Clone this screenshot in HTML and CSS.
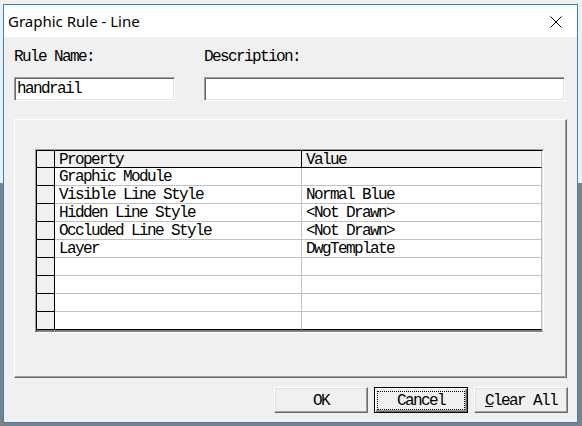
FILE: index.html
```html
<!DOCTYPE html>
<html lang="en">
<head>
  <meta charset="UTF-8">
  <title>Graphic Rule - Line</title>
  <link rel="stylesheet" href="styles.css">
</head>
<body>
<div class="dialog">
  <div class="titlebar">
    <span class="title">Graphic Rule - Line</span>
    <svg class="close" width="12" height="12" viewBox="0 0 12 12">
      <path d="M0.5 0.5 L11.5 11.5 M11.5 0.5 L0.5 11.5" stroke="#000" stroke-width="1" fill="none"/>
    </svg>
  </div>

  <div class="body">
    <div class="fields">
      <div class="field rule-name">
        <label>Rule Name:</label>
        <div class="edit">handrail</div>
      </div>
      <div class="field description">
        <label>Description:</label>
        <div class="edit"></div>
      </div>
    </div>

    <div class="panel">
      <div class="grid-frame">
        <table class="grid">
          <tr class="head">
            <td class="fixed"></td>
            <td class="prop">Property</td>
            <td class="val">Value</td>
          </tr>
          <tr><td class="fixed"></td><td class="prop">Graphic Module</td><td class="val"></td></tr>
          <tr><td class="fixed"></td><td class="prop">Visible Line Style</td><td class="val">Normal Blue</td></tr>
          <tr><td class="fixed"></td><td class="prop">Hidden Line Style</td><td class="val">&lt;Not Drawn&gt;</td></tr>
          <tr><td class="fixed"></td><td class="prop">Occluded Line Style</td><td class="val">&lt;Not Drawn&gt;</td></tr>
          <tr><td class="fixed"></td><td class="prop">Layer</td><td class="val">DwgTemplate</td></tr>
          <tr><td class="fixed"></td><td class="prop"></td><td class="val"></td></tr>
          <tr><td class="fixed"></td><td class="prop"></td><td class="val"></td></tr>
          <tr><td class="fixed"></td><td class="prop"></td><td class="val"></td></tr>
          <tr class="last"><td class="fixed"></td><td class="prop"></td><td class="val"></td></tr>
        </table>
      </div>
    </div>

    <div class="buttons">
      <button class="btn">OK</button>
      <button class="btn default">Cancel</button>
      <button class="btn"><u>C</u>lear All</button>
    </div>
  </div>
</div>
</body>
</html>
```

FILE: styles.css
```css
body {
  margin: 0;
  width: 582px;
  height: 426px;
  overflow: hidden;
  background: linear-gradient(#f0f0f0 0, #f0f0f0 183px, #808080 183px);
  font-family: "Liberation Mono", monospace;
  font-size: 16px;
  letter-spacing: -1.6px;
  color: #000;
}

.dialog {
  box-sizing: border-box;
  width: 575px;
  height: 419px;
  margin: 4px 0 0 3px;
  border: 1px solid #2a84d2;
  background: #f0f0f0;
  display: flex;
  flex-direction: column;
}

/* title bar */
.titlebar {
  height: 32px;
  background: #fff;
  display: flex;
  align-items: center;
  padding-left: 4px;
}

.title {
  font-family: "Segoe UI", "Noto Sans", sans-serif;
  font-size: 15px;
  letter-spacing: 0;
  flex: 1;
}

.close {
  margin-right: 15px;
  margin-top: 1px;
}

.body {
  padding: 12px 10px 0 10px;
}

/* name + description */
.fields {
  display: flex;
  gap: 29px;
}

.field label {
  display: block;
  line-height: 16px;
  height: 16px;
  margin-bottom: 12px;
}

.rule-name { width: 161px; }
.description { width: 361px; }

.edit {
  box-sizing: border-box;
  height: 24px;
  background: #fff;
  border: 1px solid;
  border-color: #a0a0a0 #fff #fff #a0a0a0;
  box-shadow: inset 1px 1px 0 #696969, inset -1px -1px 0 #e3e3e3;
  padding: 2px 0 0 2px;
  line-height: 18px;
  white-space: nowrap;
}

/* group panel */
.panel {
  box-sizing: border-box;
  height: 259px;
  margin-top: 18px;
  border: 1px solid;
  border-color: #fff #696969 #696969 #fff;
  box-shadow: inset -1px -1px 0 #a0a0a0;
  padding: 29px 0 0 20px;
}

.grid-frame {
  width: 507px;
  border: 1px solid;
  border-color: #a0a0a0 #fff #fff #a0a0a0;
}

.grid {
  width: 507px;
  border-spacing: 0;
  background: #fff;
  border-top: 1px solid #000;
  border-left: 1px solid #000;
  border-right: 1px solid #e3e3e3;
  border-bottom: 2px solid #808080;
  table-layout: fixed;
}

.grid td {
  padding: 2px 0 0 4px;
  height: 15px;
  line-height: 15px;
  white-space: nowrap;
  overflow: hidden;
  border-right: 1px solid #c0c0c0;
  border-bottom: 1px solid #c0c0c0;
}

.grid td.fixed {
  width: 17px;
  padding: 0;
  height: 17px;
  background: #f0f0f0;
  border-right: 1px solid #000;
  border-bottom: 1px solid #000;
}

.grid td.prop { width: 242px; }
.grid td.val { width: 235px; }

.grid tr.head td {
  height: 14px;
  line-height: 14px;
  background: #f0f0f0;
  border-bottom: 1px solid #000;
}

.grid tr.head td.fixed { height: 16px; }
.grid tr.head td.prop { border-right-color: #000; }
.grid tr.last td { border-bottom-color: #000; }

/* dialog buttons */
.buttons {
  display: flex;
  justify-content: flex-end;
  gap: 6px;
  margin-top: 9px;
  margin-right: -1px;
}

.btn {
  position: relative;
  box-sizing: border-box;
  width: 94px;
  height: 26px;
  padding: 2px 0 0 0;
  background: #f0f0f0;
  font: inherit;
  letter-spacing: inherit;
  line-height: 16px;
  color: #000;
  border: 1px solid;
  border-color: #fff #696969 #696969 #fff;
  box-shadow: inset -1px -1px 0 #a0a0a0, inset 1px 1px 0 #e3e3e3;
}

.btn.default {
  border-color: #000;
  box-shadow: inset 1px 1px 0 #fff, inset -1px -1px 0 #696969, inset -2px -2px 0 #a0a0a0;
}

.btn.default::after {
  content: "";
  position: absolute;
  left: 2px;
  right: 2px;
  top: 3px;
  bottom: 2px;
  border: 1px dotted #000;
}
```
